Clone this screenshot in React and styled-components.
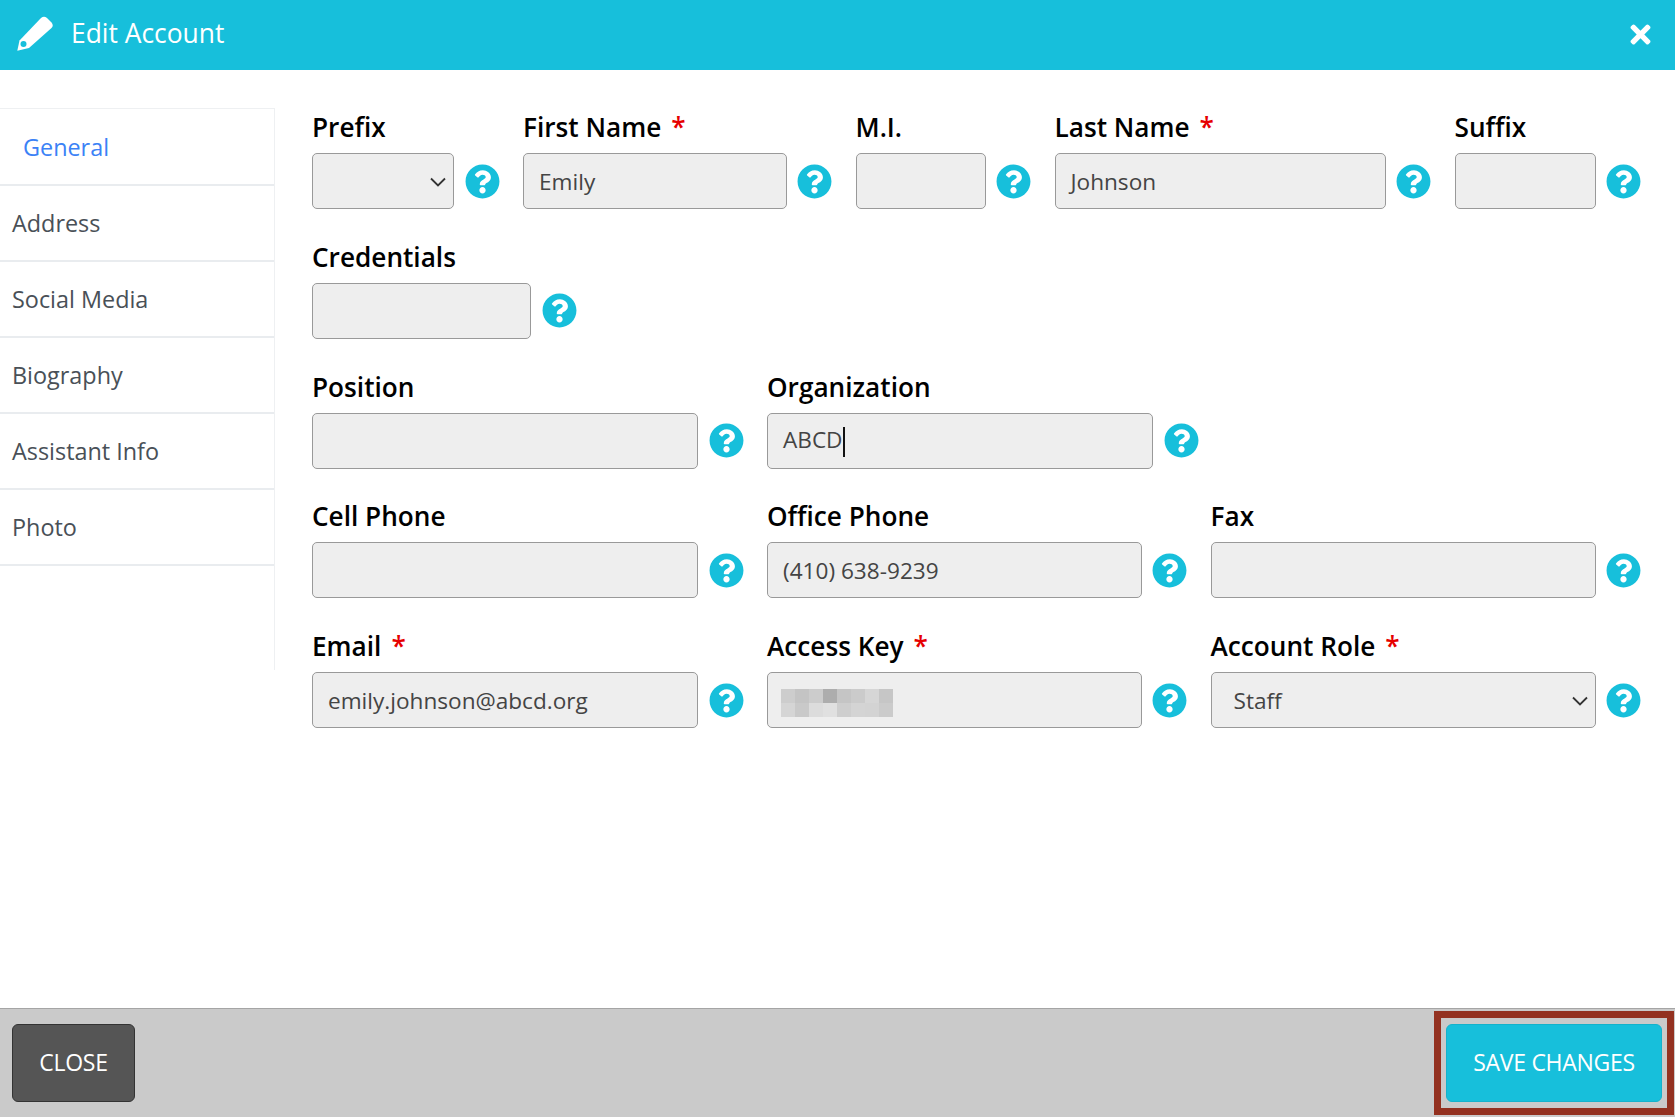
import React from 'react'
import styled, { createGlobalStyle } from 'styled-components'
import { FaTimes, FaQuestionCircle } from 'react-icons/fa'

const Global = createGlobalStyle`
  html, body { margin: 0; padding: 0; background: #fff; }
  body { font-family: "Open Sans", "Liberation Sans", sans-serif; overflow: hidden; }
  * { box-sizing: border-box; }
`

const Page = styled.div`
  display: flex;
  flex-direction: column;
  height: 1117px;
`

const Header = styled.header`
  display: flex;
  align-items: center;
  height: 70px;
  padding: 0 20px 4px 16px;
  background: #17bfdb;
  color: #fff;
`

const Title = styled.h1`
  flex: 1;
  margin: 0 0 0 15px;
  font-size: 26.4px;
  font-weight: 400;
`

const PencilIcon = styled.svg`
  flex: none;
  width: 40px;
  height: 40px;
`

const CloseIcon = styled(FaTimes)`
  flex: none;
  margin-top: 2px;
  font-size: 29px;
`

const Main = styled.main`
  flex: 1;
  display: flex;
  align-items: flex-start;
`

const Sidebar = styled.nav`
  width: 275px;
  height: 562px;
  margin-top: 38px;
  padding-top: 1px;
  border-top: 1px solid #eef0f2;
  border-right: 1px solid #eef0f2;
`

const Tab = styled.div`
  display: flex;
  align-items: center;
  height: 76px;
  padding-left: ${p => (p.$active ? '23px' : '12px')};
  padding-bottom: 1px;
  border-bottom: 2px solid #e9ecef;
  font-size: 23.4px;
  color: ${p => (p.$active ? '#3b82f6' : '#495057')};
`

const Form = styled.form`
  display: flex;
  flex-direction: column;
  gap: 27.75px;
  padding: 37px 0 0 37px;
`

const Row = styled.div`
  display: flex;
  gap: 23.5px;
`

const Field = styled.div`
  display: flex;
  flex-direction: column;
`

const Label = styled.label`
  height: 38px;
  margin-bottom: 8px;
  padding-top: 1px;
  font-size: 26.2px;
  line-height: 38px;
  font-weight: 600;
  color: #000;
`

const Star = styled.span`
  margin-left: 10px;
  color: #e60000;
`

const ControlRow = styled.div`
  display: flex;
  align-items: center;
  gap: 10.5px;
`

const Control = styled.div`
  position: relative;
  display: flex;
  align-items: center;
  justify-content: space-between;
  width: ${p => p.$w}px;
  height: 56px;
  padding: 0 ${p => (p.$select ? 7 : 15)}px 0 ${p => (p.$select ? 22 : 15)}px;
  background: #eee;
  border: 1px solid #999;
  border-radius: 5px;
  font-size: 22.6px;
  color: #444;
`

const Caret = styled.span`
  display: inline-block;
  width: 2px;
  height: 30px;
  background: #111;
  vertical-align: middle;
`

const ChevronIcon = styled.svg`
  flex: none;
  width: 16px;
  height: 10px;
  margin: 2px 0 0 auto;
  fill: none;
  stroke: #333;
  stroke-width: 1.8;
`

const Help = styled(FaQuestionCircle)`
  flex: none;
  font-size: 35px;
  color: #17bfdb;
`

const Mosaic = styled.div`
  position: absolute;
  left: 13px;
  top: 16px;
  display: grid;
  grid-template-columns: repeat(8, 14px);
  grid-auto-rows: 14px;
`

const Cell = styled.div`
  background: ${p => p.$c};
`

const Footer = styled.footer`
  display: flex;
  align-items: center;
  justify-content: space-between;
  height: 109px;
  padding: 0 1px 0 12px;
  background: #cacaca;
  border-top: 1px solid #a5a5a5;
`

const Button = styled.button`
  height: 78px;
  width: ${p => p.$w}px;
  padding: 0 0 3px;
  border: 1px solid ${p => (p.$primary ? '#14b2cc' : '#333')};
  border-radius: 6px;
  background: ${p => (p.$primary ? '#17bfdb' : '#555')};
  color: #fff;
  font-family: inherit;
  font-size: 23px;
  letter-spacing: -0.3px;
`

const Callout = styled.div`
  padding: 6px 5px;
  border: 7px solid #933120;
`

const mosaic = [
  '#cdcdcd', '#c4c4c4', '#cccccc', '#adadad', '#c5c5c5', '#cbcbcb', '#d6d6d6', '#c6c6c6',
  '#d5d5d5', '#c9c9c9', '#dcdcdc', '#e0e0e0', '#cecece', '#d4d4d4', '#d3d3d3', '#cbcbcb',
]

const tabs = ['General', 'Address', 'Social Media', 'Biography', 'Assistant Info', 'Photo']

const rows = [
  [
    { label: 'Prefix', w: 142, select: true },
    { label: 'First Name', w: 263.5, req: true, value: 'Emily' },
    { label: 'M.I.', w: 130 },
    { label: 'Last Name', w: 331, req: true, value: 'Johnson' },
    { label: 'Suffix', w: 141 },
  ],
  [{ label: 'Credentials', w: 219 }],
  [
    { label: 'Position', w: 386 },
    { label: 'Organization', w: 386, value: 'ABCD', caret: true },
  ],
  [
    { label: 'Cell Phone', w: 386 },
    { label: 'Office Phone', w: 374.5, value: '(410) 638-9239' },
    { label: 'Fax', w: 385 },
  ],
  [
    { label: 'Email', w: 386, req: true, value: 'emily.johnson@abcd.org' },
    { label: 'Access Key', w: 374.5, req: true, hidden: true },
    { label: 'Account Role', w: 385, req: true, value: 'Staff', select: true },
  ],
]

const Pencil = () => (
  <PencilIcon viewBox="8 5 40 40">
    <path
      fill="#fff"
      d="M9.3 42.7 L11.5 32.5 L33 10 Q36 7.5 39 10 L43.5 14.5 Q46 17.5 43.5 20 L21 40 Z"
    />
    <circle cx="15.5" cy="36" r="3" fill="#17bfdb" />
  </PencilIcon>
)

const Chevron = () => (
  <ChevronIcon viewBox="0 0 16 10">
    <path d="M1 1.5 L8 8.5 L15 1.5" />
  </ChevronIcon>
)

const App = () => (
  <Page>
    <Global />
    <Header>
      <Pencil />
      <Title>Edit Account</Title>
      <CloseIcon />
    </Header>
    <Main>
      <Sidebar>
        {tabs.map((t, i) => <Tab key={t} $active={i === 0}>{t}</Tab>)}
      </Sidebar>
      <Form>
        {rows.map((row, i) => (
          <Row key={i}>
            {row.map(f => (
              <Field key={f.label}>
                <Label>{f.label}{f.req && <Star>*</Star>}</Label>
                <ControlRow>
                  <Control $w={f.w} $select={f.select}>
                    <span>{f.value}{f.caret && <Caret />}</span>
                    {f.select && <Chevron />}
                    {f.hidden && (
                      <Mosaic>
                        {mosaic.map((c, j) => <Cell key={j} $c={c} />)}
                      </Mosaic>
                    )}
                  </Control>
                  <Help />
                </ControlRow>
              </Field>
            ))}
          </Row>
        ))}
      </Form>
    </Main>
    <Footer>
      <Button $w={123}>CLOSE</Button>
      <Callout>
        <Button $primary $w={216}>SAVE CHANGES</Button>
      </Callout>
    </Footer>
  </Page>
)

export default App
